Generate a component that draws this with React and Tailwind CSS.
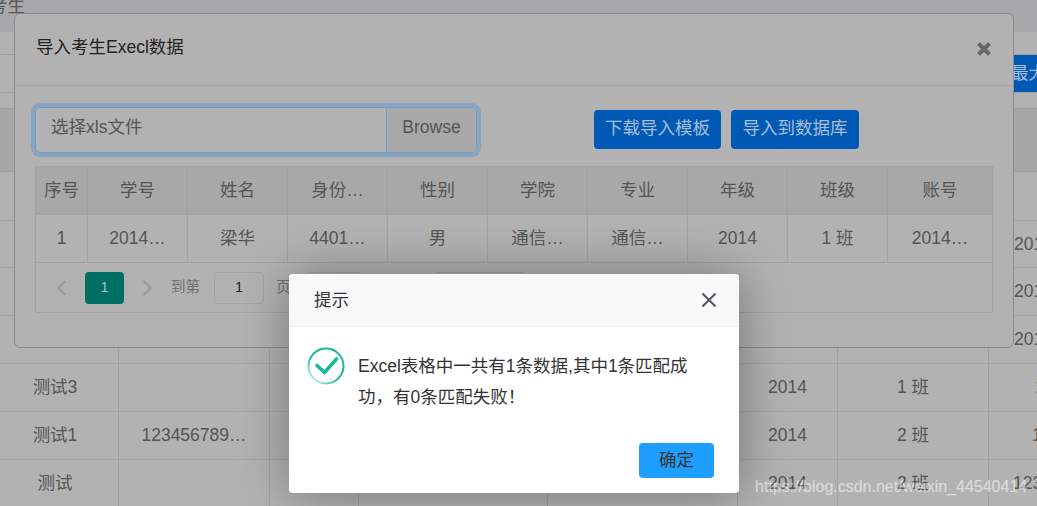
const FONT = "font-['Liberation_Sans','Noto_Sans_CJK_SC',sans-serif]";

const heads = ['序号', '学号', '姓名', '身份…', '性别', '学院', '专业', '年级', '班级', '账号'];
const cells = ['1', '2014…', '梁华', '4401…', '男', '通信…', '通信…', '2014', '1 班', '2014…'];

const pageRows = [
  { h: 'h-[49px]', pad: 'pl-[25px]', cols: ['', '', '', '', '', '', '', ''] },
  { h: 'h-[47px]', pad: 'pl-[25px]', cols: ['', '', '', '', '', '', '', '2014…'] },
  { h: 'h-[48px]', pad: 'pl-[25px]', cols: ['', '', '', '', '', '', '', '2014…'] },
  { h: 'h-[48px]', pad: 'pl-[25px]', cols: ['测试2', '', '', '', '', '', '1 班', '2014…'] },
  { h: 'h-[48px]', pad: 'pl-[46px]', cols: ['测试3', '', '', '', '', '2014', '1 班', '11111111'] },
  { h: 'h-[48px]', pad: 'pl-[43px]', cols: ['测试1', '123456789…', '', '', '', '2014', '2 班', '111111'] },
  { h: 'h-[48px]', pad: 'pl-[24px]', cols: ['测试', '', '', '', '', '2014', '2 班', '12345'] },
];

function PageTable() {
  return (
    <div className="-ml-2 w-[1200px] text-[17.5px] text-[#555555]">
      <div className="h-[63px] bg-[#a7a7a7] border-b border-[#a0a0a0]" />
      {pageRows.map((row, i) => (
        <div key={i} className={`grid grid-cols-[127px_151px_89px_189px_190px_100px_151px_150px] border-b border-[#a0a0a0] ${row.h}`}>
          {row.cols.map((c, j) => (
            <div key={j} className={`flex items-center border-r border-[#a0a0a0] ${j === 7 ? `justify-start ${row.pad}` : 'justify-center'}`}>
              {c}
            </div>
          ))}
        </div>
      ))}
    </div>
  );
}

function ImportModal() {
  return (
    <div className="absolute left-[14px] top-[13px] h-[335px] w-[1000px] rounded-md border border-[#8c8c8c] bg-[#b2b2b2]">
      <div className="flex h-[72px] items-center justify-between border-b border-[#a6a6a6] pb-1 pl-[21px] pr-[21px] text-[17.5px] text-[#222222]">
        <span>导入考生Execl数据</span>
        <svg width="16" height="16" viewBox="0 0 16 16" className="mt-[3px]">
          <path d="M2.5 2.5 13.5 13.5M13.5 2.5 2.5 13.5" stroke="#666666" strokeWidth="4" />
        </svg>
      </div>
      <div className="pl-5 pt-[21px]">
        <div className="flex items-start">
          <div className="flex h-[46px] w-[442px] rounded-[5px] border border-[#6b9bd0] shadow-[0_0_0_4px_#8aa3bf] text-[17.5px] text-[#555555]">
            <div className="flex flex-1 items-center pb-[5px] pl-[15px]">选择xls文件</div>
            <div className="flex w-[90px] items-center justify-center rounded-r-[4px] border-l border-[#6b9bd0] bg-[#a8a8a8] pb-[5px]">Browse</div>
          </div>
          <button className="ml-[117px] mt-[3px] h-[39px] w-[127px] rounded bg-[#005ab5] pb-[2px] text-[17.5px] text-[#a8bed6]">下载导入模板</button>
          <button className="ml-[10px] mt-[3px] h-[39px] w-[128px] rounded bg-[#005ab5] pb-[2px] text-[17.5px] text-[#a8bed6]">导入到数据库</button>
        </div>
        <div className="mt-[13px] h-[147px] w-[958px] border border-[#a3a3a3] text-[17.5px] text-[#555555]">
          <div className="grid h-[48px] grid-cols-[52px_repeat(8,100px)_105px] border-b border-[#a3a3a3] bg-[#a8a8a8]">
            {heads.map((h, i) => (
              <div key={i} className="flex items-center justify-center border-r border-[#a0a0a0] pb-px">{h}</div>
            ))}
          </div>
          <div className="grid h-[48px] grid-cols-[52px_repeat(8,100px)_105px] border-b border-[#a3a3a3]">
            {cells.map((c, i) => (
              <div key={i} className="flex items-center justify-center border-r border-[#a3a3a3] pb-px">{c}</div>
            ))}
          </div>
          <div className="flex h-[49px] items-center text-[14.5px] text-[#707070]">
            <svg width="12" height="18" viewBox="0 0 12 18" className="ml-5" fill="none" stroke="#989898" strokeWidth="1.8">
              <path d="M9.5 2 2.5 9l7 7" />
            </svg>
            <div className="ml-[17px] flex h-8 w-[39px] items-center justify-center rounded-sm bg-[#006e60] text-[#a8c4bf]">1</div>
            <svg width="12" height="18" viewBox="0 0 12 18" className="ml-[17px]" fill="none" stroke="#989898" strokeWidth="1.8">
              <path d="M2.5 2 9.5 9l-7 7" />
            </svg>
            <span className="ml-[18px]">到第</span>
            <div className="ml-[14px] flex h-8 w-[50px] items-center justify-center rounded-sm border border-[#a3a3a3] text-[#222222]">1</div>
            <span className="ml-[12px] w-[15px]">页</span>
            <div className="ml-[13px] h-8 w-[57px] rounded-sm border border-[#a3a3a3]" />
            <div className="ml-[72px] h-8 w-[93px] rounded-sm border border-[#a3a3a3]" />
          </div>
        </div>
      </div>
    </div>
  );
}

function SuccessIcon() {
  return (
    <svg width="40" height="40" viewBox="0 0 40 40" fill="none">
      <defs>
        <linearGradient id="ring" x1="0.85" y1="0.1" x2="0.1" y2="0.9">
          <stop offset="0" stopColor="#16b99a" />
          <stop offset="0.6" stopColor="#16b99a" />
          <stop offset="1" stopColor="#16b99a" stopOpacity="0.25" />
        </linearGradient>
      </defs>
      <circle cx="20" cy="20" r="17.5" stroke="url(#ring)" strokeWidth="2" />
      <path d="M11 19.5 18.5 26.5 30.5 13" stroke="#16b99a" strokeWidth="3.6" strokeLinejoin="round" strokeLinecap="round" />
    </svg>
  );
}

function TipDialog() {
  return (
    <div className="absolute left-[289px] top-[274px] h-[219px] w-[450px] overflow-hidden rounded-sm bg-white shadow-[1px_1px_50px_rgba(0,0,0,0.35)]">
      <div className="flex h-[53px] items-center justify-between border-b border-[#eeeeee] bg-[#f8f8f8] pl-[25px] pr-[22px] text-[17.5px] text-[#333333]">
        <span>提示</span>
        <svg width="16" height="16" viewBox="0 0 16 16" fill="none">
          <path d="M1.5 1.5 14.5 14.5M14.5 1.5 1.5 14.5" stroke="#555560" strokeWidth="2" />
        </svg>
      </div>
      <div className="flex pl-[17px] pr-[50px] pt-[19px]">
        <div className="shrink-0"><SuccessIcon /></div>
        <p className="ml-[12px] pt-[5px] text-[17.5px] leading-[31px] text-[#333333]">
          Excel表格中一共有1条数据,其中1条匹配成功，有0条匹配失败！
        </p>
      </div>
      <div className="mt-[30px] flex justify-end pr-[25px]">
        <button className="h-[35px] w-[75px] rounded-sm bg-[#1e9fff] text-[17.5px] text-[#333333]">确定</button>
      </div>
    </div>
  );
}

export default function App() {
  return (
    <div className={`relative h-[506px] w-[1037px] overflow-hidden bg-[#b2b2b2] ${FONT}`}>
      <div className="h-8 overflow-hidden bg-[#a7a8aa]">
        <div className="-ml-[10px] -mt-[6px] text-[17.5px] leading-[24px] text-[#555555]">考生</div>
      </div>
      <div className="h-[23px] border-b border-[#a0a0a0]" />
      <div className="h-[38px] border-b border-[#a0a0a0]">
        <div className="ml-[1000px] flex h-[37px] w-[100px] items-center bg-[#005ab5] pl-[11px] text-[17.5px] text-[#a8bed6]">最大</div>
      </div>
      <div className="h-4 border-b border-[#a0a0a0]" />
      <PageTable />
      <ImportModal />
      <TipDialog />
      <div className="absolute left-[755px] top-[477px] text-[16px] leading-[20px] text-white/55">https://blog.csdn.net/weixin_44540414</div>
    </div>
  );
}
